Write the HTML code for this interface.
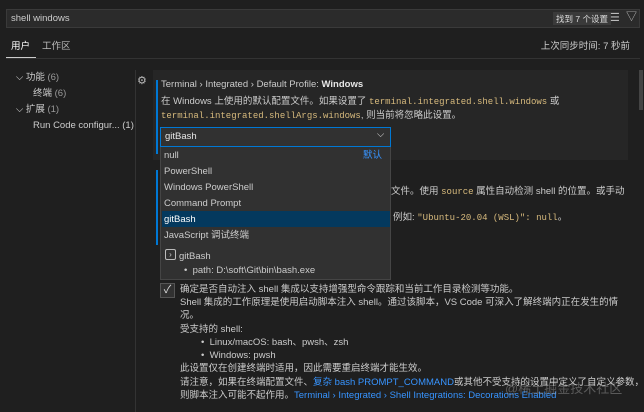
<!DOCTYPE html>
<html><head><meta charset="utf-8"><style>
*{margin:0;padding:0;box-sizing:border-box}
body{width:644px;height:412px;background:#1f1f1f;color:#ccc;font-family:"Liberation Sans","Noto Sans CJK SC",sans-serif;font-size:9.5px;position:relative;overflow:hidden}
.a{position:absolute;white-space:nowrap;line-height:12px}
.m{font-family:"Liberation Mono",monospace;color:#d7ba7d;font-size:9px}
.l{color:#3794ff}
</style></head><body>
<div class="a" style="left:6px;top:9px;width:634px;height:19px;background:#2b2b2b;border:1px solid #3a3a3a"></div>
<div class="a" style="left:11px;top:13px;color:#ccc">shell windows</div>
<div class="a" style="left:553px;top:12px;height:13px;padding:1px 3px;background:#3a3a3a;font-size:8.5px;color:#ddd">找到 7 个设置</div>
<div class="a" style="left:610px;top:12px;font-size:11px;color:#bbb">☰</div>
<div class="a" style="left:626px;top:11px;font-size:11px;color:#bbb">▽</div>
<div class="a" style="left:11px;top:41px;color:#fff">用户</div>
<div class="a" style="left:42px;top:41px;color:#bbb">工作区</div>
<div class="a" style="left:6px;top:57px;width:30px;height:2px;background:#ccc"></div>
<div class="a" style="left:6px;top:58px;width:634px;height:1px;background:#333"></div>
<div class="a" style="right:14px;top:41px;color:#ccc">上次同步时间: 7 秒前</div>
<div class="a" style="left:16px;top:72px">⌵ 功能 <span style="color:#999">(6)</span></div>
<div class="a" style="left:33px;top:88px">终端 <span style="color:#999">(6)</span></div>
<div class="a" style="left:16px;top:104px">⌵ 扩展 <span style="color:#999">(1)</span></div>
<div class="a" style="left:33px;top:120px">Run Code configur... (1)</div>
<div class="a" style="left:135px;top:70px;width:1px;height:342px;background:#333"></div>
<div class="a" style="left:153px;top:70px;width:475px;height:90px;background:#262626"></div>
<div class="a" style="left:137px;top:75px;font-size:11px;color:#bbb">⚙</div>
<div class="a" style="left:156px;top:80px;width:2px;height:74px;background:#0078d4"></div>
<div class="a" style="left:161px;top:79px">Terminal › Integrated › Default Profile: <b style="color:#e6e6e6">Windows</b></div>
<div class="a" style="left:161px;top:96px">在 Windows 上使用的默认配置文件。如果设置了 <span class="m">terminal.integrated.shell.windows</span> 或</div>
<div class="a" style="left:161px;top:110px"><span class="m">terminal.integrated.shellArgs.windows</span>, 则当前将忽略此设置。</div>
<div class="a" style="left:156px;top:170px;width:2px;height:75px;background:#0078d4"></div>
<div class="a" style="left:391px;top:186px">文件。使用 <span class="m">source</span> 属性自动检测 shell 的位置。或手动</div>
<div class="a" style="left:393px;top:212px">例如: <span class="m">"Ubuntu-20.04 (WSL)": null</span>。</div>
<div class="a" style="left:160px;top:127px;width:231px;height:153px;background:#313131;border:1px solid #454545"></div>
<div class="a" style="left:160px;top:127px;width:231px;height:20px;border:1px solid #0078d4;background:#313131"></div>
<div class="a" style="left:165px;top:131px;color:#e6e6e6">gitBash</div>
<div class="a" style="left:377px;top:129px;color:#ccc">⌵</div>
<div class="a" style="left:164px;top:150px">null</div>
<div class="a l" style="left:363px;top:150px">默认</div>
<div class="a" style="left:164px;top:166px">PowerShell</div>
<div class="a" style="left:164px;top:182px">Windows PowerShell</div>
<div class="a" style="left:164px;top:198px">Command Prompt</div>
<div class="a" style="left:162px;top:211px;width:228px;height:16px;background:#04395e"></div>
<div class="a" style="left:164px;top:214px;color:#fff">gitBash</div>
<div class="a" style="left:164px;top:230px">JavaScript 调试终端</div>
<div class="a" style="left:165px;top:249px;width:11px;height:11px;border:1px solid #bbb;border-radius:2px;font-size:8px;line-height:9px;text-align:center">›</div>
<div class="a" style="left:179px;top:251px">gitBash</div>
<div class="a" style="left:184px;top:265px">•&nbsp; path: D:\soft\Git\bin\bash.exe</div>
<div class="a" style="left:160px;top:283px;width:15px;height:15px;background:#313131;border:1px solid #555;color:#ddd;font-size:11px;line-height:13px;text-align:center">✓</div>
<div class="a" style="left:180px;top:284px">确定是否自动注入 shell 集成以支持增强型命令跟踪和当前工作目录检测等功能。</div>
<div class="a" style="left:180px;top:297px">Shell 集成的工作原理是使用启动脚本注入 shell。通过该脚本，VS Code 可深入了解终端内正在发生的情</div>
<div class="a" style="left:180px;top:310px">况。</div>
<div class="a" style="left:180px;top:324px">受支持的 shell:</div>
<div class="a" style="left:201px;top:337px">•&nbsp; Linux/macOS: bash、pwsh、zsh</div>
<div class="a" style="left:201px;top:350px">•&nbsp; Windows: pwsh</div>
<div class="a" style="left:180px;top:363px">此设置仅在创建终端时适用，因此需要重启终端才能生效。</div>
<div class="a" style="left:180px;top:377px">请注意，如果在终端配置文件、<span class="l">复杂 bash PROMPT_COMMAND</span>或其他不受支持的设置中定义了自定义参数，</div>
<div class="a" style="left:180px;top:390px">则脚本注入可能不起作用。<span class="l">Terminal › Integrated › Shell Integrations: Decorations Enabled</span></div>
<div class="a" style="left:505px;top:381px;font-size:13px;line-height:16px;color:rgba(200,200,200,.35)">@稀土掘金技术社区</div>
<div class="a" style="left:639px;top:70px;width:4px;height:40px;background:#444"></div>
</body></html>
